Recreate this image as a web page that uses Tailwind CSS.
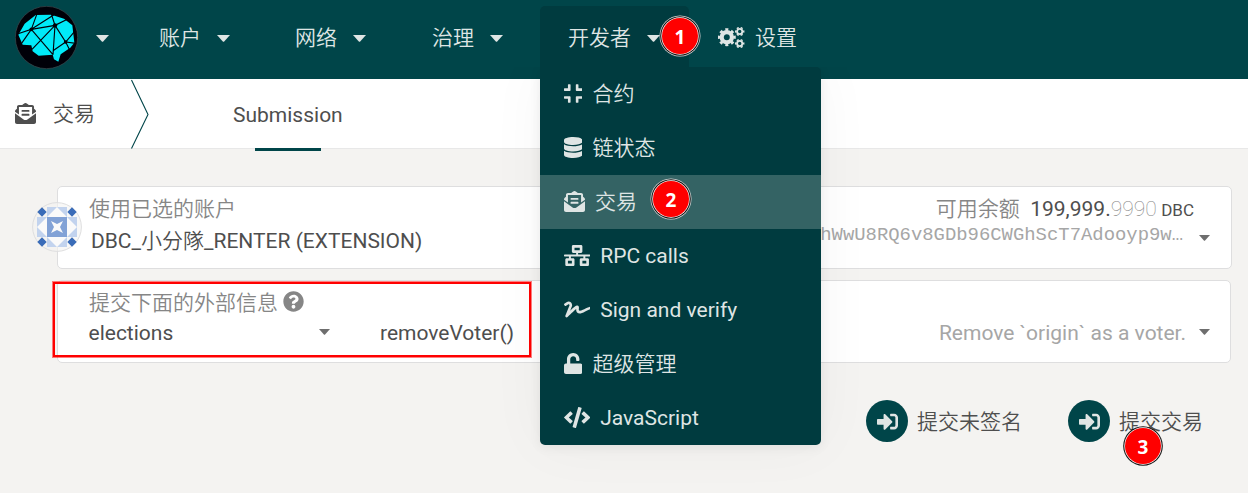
<!DOCTYPE html>
<html lang="zh-CN">
<head>
<meta charset="utf-8">
<title>交易</title>
<script src="https://cdn.jsdelivr.net/npm/@tailwindcss/browser@4"></script>
</head>
<body class="relative w-[1248px] h-[493px] overflow-hidden bg-[#f4f3f1] font-[Roboto,'Noto_Sans_CJK_SC',sans-serif] text-[21px] leading-[30px] text-[#4e4e4e] whitespace-nowrap">
<svg class="hidden">
  <symbol id="caret" viewBox="0 0 13 7"><path d="M0 0H13L7.2 6.4Q6.5 7 5.8 6.4Z"/></symbol>
  <symbol id="mail" viewBox="0 0 512 512"><path d="M176 216h160c8.84 0 16-7.16 16-16v-16c0-8.84-7.16-16-16-16H176c-8.84 0-16 7.16-16 16v16c0 8.84 7.16 16 16 16zm-16 80c0 8.84 7.16 16 16 16h160c8.84 0 16-7.16 16-16v-16c0-8.84-7.16-16-16-16H176c-8.84 0-16 7.16-16 16v16zm96 121.13c-16.42 0-32.84-5.06-46.86-15.19L0 250.86V464c0 26.51 21.49 48 48 48h416c26.51 0 48-21.49 48-48V250.86L302.86 401.94c-14.02 10.12-30.44 15.19-46.86 15.19zm237.61-254.18c-8.85-6.94-17.24-13.47-29.61-22.81V96c0-26.51-21.49-48-48-48h-77.55c-3.04-2.2-5.87-4.26-9.04-6.56C312.6 29.17 279.2-.35 256 0c-23.2-.35-56.59 29.17-73.41 41.44-3.17 2.3-6 4.36-9.04 6.56H96c-26.51 0-48 21.49-48 48v44.14c-12.37 9.33-20.76 15.87-29.61 22.81A47.995 47.995 0 0 0 0 200.72v10.65l96 69.35V96h320v184.72l96-69.35v-10.65c0-14.74-6.78-28.67-18.39-37.77z"/></symbol>
  <symbol id="signin" viewBox="0 0 512 512"><path d="M416 448h-84c-6.6 0-12-5.4-12-12v-40c0-6.6 5.4-12 12-12h84c17.7 0 32-14.3 32-32V160c0-17.7-14.3-32-32-32h-84c-6.6 0-12-5.4-12-12V76c0-6.6 5.4-12 12-12h84c53 0 96 43 96 96v192c0 53-43 96-96 96zm-47-201L201 79c-15-15-41-4.5-41 17v96H24c-13.3 0-24 10.7-24 24v96c0 13.3 10.7 24 24 24h136v96c0 21.5 26 32 41 17l168-168c9.3-9.4 9.3-24.6 0-34z"/></symbol>
</svg>

<header class="flex h-[79px] bg-[#004549] pl-[15px] text-[#dfe5e4] fill-[#dfe5e4] font-[350]">
  <div class="flex items-center w-[144px] pb-1">
    <svg class="w-[63px] h-[63px]" viewBox="21 18 189 189">
      <circle cx="115.500" cy="112.500" r="93.500" fill="#000008" stroke="#3f4a50" stroke-width="2"/>
      <path fill="#00eaf8" d="M83 45L130 44L168 56L193 76L199 128L187 143L158 163L151 185L138 178L134 164L92 167L74 154L70 136L44 134L31 104L50 71Z"/>
      <path stroke="#000008" stroke-width="3.400" fill="none" d="M86 44L70 88L28 102M70 88L138 44M70 88L141 76L178 58M70 88L38 134M70 88L135 164M141 76L72 148M141 76L130 42M141 76L135 164M141 76L173 126L200 94M173 126L135 152M173 126L204 130M173 126L184 148"/>
      <circle cx="70" cy="88" r="5.500" fill="#000008"/><circle cx="141" cy="76" r="6.500" fill="#000008"/><circle cx="173" cy="126" r="5.500" fill="#000008"/>
    </svg>
    <svg class="ml-[18px] mt-[2px] w-[13px] h-[7px]"><use href="#caret"/></svg>
  </div>
  <div class="flex items-center w-[136px] pb-[3px]">账户<svg class="ml-4 mt-[1px] w-[13px] h-[7px]"><use href="#caret"/></svg></div>
  <div class="flex items-center w-[137px] pb-[3px]">网络<svg class="ml-4 mt-[1px] w-[13px] h-[7px]"><use href="#caret"/></svg></div>
  <div class="flex items-center w-[108px] pb-[3px]">治理<svg class="ml-4 mt-[1px] w-[13px] h-[7px]"><use href="#caret"/></svg></div>
  <div class="relative z-10 mt-[6px] h-[61px] w-[149px] rounded-t-[5px] bg-[#003b3f]">
    <div class="flex items-center h-[64px] pl-7">开发者<svg class="ml-4 mt-[1px] w-[13px] h-[7px]"><use href="#caret"/></svg></div>
    <nav class="absolute left-0 top-[61px] w-[281px] h-[378px] rounded-b-[5px] rounded-tr-[5px] bg-[#003b3f] shadow-[0_0_60px_rgba(0,0,0,0.04),0_2px_12px_rgba(0,0,0,0.07)] [clip-path:inset(0_-100px_-100px_-100px)]">
      <div class="flex items-center h-[54px] pl-6"><svg class="w-[18.400px] h-[21px] mb-px mr-[10px]" viewBox="0 0 448 512"><path d="M436 192H312c-13.3 0-24-10.7-24-24V44c0-6.6 5.4-12 12-12h40c6.6 0 12 5.4 12 12v84h84c6.6 0 12 5.4 12 12v40c0 6.6-5.4 12-12 12zm-276-24V44c0-6.6-5.400-12-12-12h-40c-6.6 0-12 5.400-12 12v84H12c-6.6 0-12 5.400-12 12v40c0 6.6 5.400 12 12 12h124c13.300 0 24-10.700 24-24zm0 300V344c0-13.300-10.700-24-24-24H12c-6.600 0-12 5.400-12 12v40c0 6.600 5.400 12 12 12h84v84c0 6.600 5.400 12 12 12h40c6.600 0 12-5.400 12-12zm192 0v-84h84c6.600 0 12-5.400 12-12v-40c0-6.600-5.400-12-12-12H312c-13.300 0-24 10.700-24 24v124c0 6.600 5.400 12 12 12h40c6.600 0 12-5.400 12-12z"/></svg>合约</div>
      <div class="flex items-center h-[54px] pl-6"><svg class="w-[18.400px] h-[21px] mb-px mr-[10px]" viewBox="0 0 448 512"><path d="M448 73.143v45.714C448 159.143 347.667 192 224 192S0 159.143 0 118.857V73.143C0 32.857 100.333 0 224 0s224 32.857 224 73.143zM448 176v102.857C448 319.143 347.667 352 224 352S0 319.143 0 278.857V176c48.125 33.143 136.208 48.572 224 48.572S399.874 209.143 448 176zm0 160v102.857C448 479.143 347.667 512 224 512S0 479.143 0 438.857V336c48.125 33.143 136.208 48.572 224 48.572S399.874 369.143 448 336z"/></svg>链状态</div>
      <div class="flex items-center h-[54px] pl-6 bg-[#346364]"><svg class="w-[21px] h-[21px] mb-px mr-[10px]"><use href="#mail"/></svg>交易</div>
      <div class="flex items-center h-[54px] pl-6 font-normal"><svg class="w-[26.250px] h-[21px] mb-px mr-[10px]" viewBox="0 0 640 512"><path d="M640 264v-16c0-8.840-7.160-16-16-16H344v-40h72c17.670 0 32-14.330 32-32V32c0-17.670-14.330-32-32-32H224c-17.670 0-32 14.330-32 32v128c0 17.670 14.330 32 32 32h72v40H16c-8.840 0-16 7.160-16 16v16c0 8.840 7.160 16 16 16h104v40H64c-17.670 0-32 14.330-32 32v128c0 17.670 14.330 32 32 32h160c17.670 0 32-14.330 32-32V352c0-17.670-14.330-32-32-32h-56v-40h304v40h-56c-17.670 0-32 14.330-32 32v128c0 17.670 14.330 32 32 32h160c17.670 0 32-14.330 32-32V352c0-17.670-14.330-32-32-32h-56v-40h104c8.840 0 16-7.160 16-16zM256 128V64h128v64H256zm-64 320H96v-64h96v64zm352 0h-96v-64h96v64z"/></svg>RPC calls</div>
      <div class="flex items-center h-[54px] pl-6 font-normal"><svg class="w-[26.250px] h-[21px] mb-px mr-[10px]" viewBox="0 0 640 512"><path d="M623.2 192c-51.8 3.5-125.7 54.7-163.1 71.5-29.1 13.1-54.2 24.4-76.1 24.4-22.6 0-26-16.2-21.3-51.9 1.1-8 11.7-79.2-42.7-76.1-25.1 1.5-64.3 24.8-169.500 126L192 182.200c30.400-75.900-53.200-151.500-129.700-102.800L7.400 116.300C0 121-2.200 130.900 2.500 138.400l17.200 27c4.700 7.500 14.600 9.700 22.100 4.900l58-38.900c18.400-11.700 40.700 7.200 32.700 27.100L34.300 404.100C27.500 421 37 448 64 448c8.300 0 16.500-3.200 22.600-9.400 42.200-42.200 154.700-150.700 211.200-195.800-2.200 28.500-2.100 58.900 20.600 83.800 15.300 16.800 37.300 25.300 65.500 25.300 35.600 0 68-14.600 102.300-30 33-14.800 99-62.600 138.400-65.800 8.500-.7 15.200-7.300 15.200-15.800v-32.100c.2-9.100-7.500-16.800-16.600-16.200z"/></svg>Sign and verify</div>
      <div class="flex items-center h-[54px] pl-6"><svg class="w-[18.400px] h-[21px] mb-px mr-[10px]" viewBox="0 0 448 512"><path d="M400 256H152V152.900c0-39.600 31.700-72.500 71.300-72.900 40-.4 72.700 32.100 72.700 72v16c0 13.300 10.700 24 24 24h32c13.300 0 24-10.700 24-24v-16C376 68 307.500-.3 223.500 0 139.500.3 72 69.500 72 153.500V256H48c-26.500 0-48 21.500-48 48v160c0 26.500 21.500 48 48 48h352c26.500 0 48-21.500 48-48V304c0-26.500-21.500-48-48-48z"/></svg>超级管理</div>
      <div class="flex items-center h-[54px] pl-6 font-normal"><svg class="w-[26.250px] h-[21px] mb-px mr-[10px]" viewBox="0 0 640 512"><path d="M278.900 511.500l-61-17.700c-6.400-1.800-10-8.500-8.200-14.900L346.200 8.700c1.800-6.400 8.500-10 14.900-8.200l61 17.700c6.400 1.800 10 8.500 8.200 14.900L293.800 503.300c-1.900 6.400-8.500 10.100-14.900 8.200zm-114-112.200l43.500-46.400c4.600-4.900 4.300-12.700-.8-17.200L117 256l90.600-79.700c5.100-4.500 5.500-12.300.8-17.200l-43.500-46.400c-4.500-4.800-12.100-5.100-17-.5L3.800 247.200c-5.100 4.700-5.100 12.800 0 17.500l144.100 135.100c4.900 4.600 12.500 4.400 17-.5zm327.200.6l144.100-135.100c5.100-4.700 5.100-12.800 0-17.500L492.100 112.100c-4.800-4.500-12.400-4.300-17 .5L431.600 159c-4.600 4.900-4.300 12.700.8 17.200L523 256l-90.600 79.700c-5.100 4.500-5.500 12.300-.8 17.200l43.500 46.400c4.500 4.900 12.100 5.100 17 .6z"/></svg>JavaScript</div>
    </nav>
  </div>
  <div class="flex items-center pl-[29px] pb-[3px]">
    <svg class="w-[27px] h-[21px] mb-px mr-[10px]" viewBox="0 0 27 21" fill="none" stroke="#dfe5e4">
      <circle cx="8.800" cy="10.200" r="5.100" stroke-width="4.200"/>
      <circle cx="8.800" cy="10.200" r="7.700" stroke-width="2.600" pathLength="16" stroke-dasharray="1 1" stroke-dashoffset=".5"/>
      <circle cx="21.700" cy="4.500" r="2.650" stroke-width="1.900"/>
      <circle cx="21.700" cy="4.500" r="4" stroke-width="1.500" pathLength="12" stroke-dasharray="1 1" stroke-dashoffset=".5"/>
      <circle cx="21.700" cy="16.500" r="2.650" stroke-width="1.900"/>
      <circle cx="21.700" cy="16.500" r="4" stroke-width="1.500" pathLength="12" stroke-dasharray="1 1" stroke-dashoffset=".5"/>
    </svg>设置</div>
</header>

<div class="flex h-[70px] bg-white border-b border-[#e8e8e8]">
  <div class="flex items-center w-[131px] pl-[15px] font-[350]"><svg class="w-[21px] h-[21px] mr-[17px] fill-[#4e4e4e]"><use href="#mail"/></svg>交易</div>
  <svg class="w-[18px] h-[70px]" viewBox="0 0 18 70" fill="none" stroke="#004549" stroke-width="1.100"><path d="M.5 1L17 35.500L.5 69.500"/></svg>
  <div class="relative ml-[84px] pt-[21px]">Submission<span class="absolute left-[22px] top-[69px] w-[66px] h-[3px] bg-[#004549]"></span></div>
</div>

<main class="pt-[37px] pl-[57px]">
  <section class="relative flex justify-between w-[1175px] h-[83px] rounded-[5px] border border-[#dededf] bg-white pl-[31px]">
    <svg class="absolute left-[-26px] top-[15px] w-[50px] h-[50px]" viewBox="0 0 50 50">
      <circle cx="25" cy="25" r="24.400" fill="#f4f3f1" fill-opacity=".6" stroke="#dededf"/>
      <path fill="#c2d3ee" d="M15 5H35V15H15ZM15 35H35V45H15ZM5 15H15V35H5ZM35 15H45V35H35Z"/>
      <path fill="#fafafa" d="M25 5L35 15H15ZM15 35H35L25 45ZM15 15V35L5 25ZM35 15L45 25L35 35Z"/>
      <path fill="#3a6cb8" d="M10 5.300L14.700 10L10 14.700L5.300 10ZM40 5.300L44.700 10L40 14.700L35.300 10ZM10 35.300L14.700 40L10 44.700L5.300 40ZM40 35.300L44.700 40L40 44.700L35.300 40Z"/>
      <path fill="#82a2d6" d="M15 15H35V35H15Z"/>
      <path fill="#fafafa" d="M19 19L25 22L31 19L28 25L31 31L25 28L19 31L22 25Z"/>
    </svg>
    <div>
      <div class="h-[32px] pt-[7px] font-[350] text-[#868686]">使用已选的账户</div>
      <div class="pt-[7px] pl-[2px] leading-[30px]">DBC_<span class="font-[350]">小分隊</span>_RENTER (EXTENSION)</div>
    </div>
    <div class="flex">
      <div class="flex flex-col items-end">
        <div class="flex h-[32px] pt-[7px] mr-[-11px]"><span class="font-[350] text-[#868686] mr-[10.500px]">可用余额</span><span>199,999.</span><span class="font-thin opacity-70">9990</span><span class="ml-[4.500px] text-[17px] pt-px">DBC</span></div>
        <div class="pt-px font-['Liberation_Mono',monospace] text-[18.900px] text-[#a6a6a6]">5FhWwU8RQ6v8GDb96CWGhScT7Adooyp9w…</div>
      </div>
      <svg class="ml-4 mr-[21px] mt-[48px] w-[11px] h-[6px] fill-[#6e6e6e]" viewBox="0 0 13 7"><use href="#caret"/></svg>
    </div>
  </section>

  <section class="relative flex w-[1174px] h-[83px] mt-[11px] rounded-[5px] border border-[#dededf] bg-white pl-[30.500px]">
    <div class="w-[291.500px]">
      <div class="flex h-[37px] pt-[7px] pl-[0.500px] font-[350] text-[#868686]">提交下面的外部信息<svg class="ml-[5px] mt-[3px] w-[21px] h-[21px] fill-[#868686]" viewBox="0 0 512 512"><path d="M504 256c0 136.997-111.043 248-248 248S8 392.997 8 256C8 119.083 119.043 8 256 8s248 111.083 248 248zM262.655 90c-54.497 0-89.255 22.957-116.549 63.758-3.536 5.286-2.353 12.415 2.715 16.258l34.699 26.310c5.205 3.947 12.621 3.008 16.665-2.122 17.864-22.658 30.113-35.797 57.303-35.797 20.429 0 45.698 13.148 45.698 32.958 0 14.976-12.363 22.667-32.534 33.976C247.128 238.528 216 254.941 216 296v4c0 6.627 5.373 12 12 12h56c6.627 0 12-5.373 12-12v-1.333c0-28.462 83.186-29.647 83.186-106.667 0-58.002-60.165-102-116.531-102zM256 338c-25.365 0-46 20.635-46 46 0 25.364 20.635 46 46 46s46-20.636 46-46c0-25.365-20.635-46-46-46z"/></svg></div>
      <div class="flex">elections<svg class="ml-auto mt-[11px] mr-[50px] w-[11px] h-[6px] fill-[#6e6e6e]" viewBox="0 0 13 7"><use href="#caret"/></svg></div>
    </div>
    <div class="flex grow pt-[37px]">removeVoter()<span class="ml-auto text-[#a6a6a6]">Remove `origin` as a voter.</span><svg class="ml-[13px] mr-[20px] mt-[11px] w-[11px] h-[6px] fill-[#6e6e6e]" viewBox="0 0 13 7"><use href="#caret"/></svg></div>
    <div class="absolute left-[-5px] top-[1px] w-[478px] h-[75px] border-2 border-[#ff0000] ring-1 ring-[#ff0000]/50"></div>
  </section>

  <div class="flex justify-end pt-[37px] pr-[45px] font-[350]">
    <div class="flex items-center mr-[46px]"><span class="flex items-center justify-center w-[42px] h-[42px] rounded-full bg-[#004549] mr-[9px]"><svg class="w-[21px] h-[21px] fill-[#dfe5e4]"><use href="#signin"/></svg></span><span class="pt-0.5">提交未签名</span></div>
    <div class="flex items-center"><span class="flex items-center justify-center w-[42px] h-[42px] rounded-full bg-[#004549] mr-[9px]"><svg class="w-[21px] h-[21px] fill-[#dfe5e4]"><use href="#signin"/></svg></span><span class="pt-0.5">提交交易</span></div>
  </div>
</main>

<div class="absolute z-20 left-[662px] top-[18px] flex items-center justify-center w-[36px] h-[36px] pt-0.5 rounded-full bg-[#ff0000] shadow-[0_0_0_0.7px_#fff,0_0_0_1.800px_#111,0_0_0_2.500px_#ddd] text-white font-bold text-[19px] font-['Noto_Sans',sans-serif]">1</div>
<div class="absolute z-20 left-[653px] top-[181px] flex items-center justify-center w-[36px] h-[36px] pt-0.5 rounded-full bg-[#ff0000] shadow-[0_0_0_0.7px_#fff,0_0_0_1.800px_#111,0_0_0_2.500px_#ddd] text-white font-bold text-[19px] font-['Noto_Sans',sans-serif]">2</div>
<div class="absolute z-20 left-[1125px] top-[428px] flex items-center justify-center w-[36px] h-[36px] pt-0.5 rounded-full bg-[#ff0000] shadow-[0_0_0_0.7px_#fff,0_0_0_1.800px_#111] text-white font-bold text-[19px] font-['Noto_Sans',sans-serif]">3</div>
</body>
</html>
